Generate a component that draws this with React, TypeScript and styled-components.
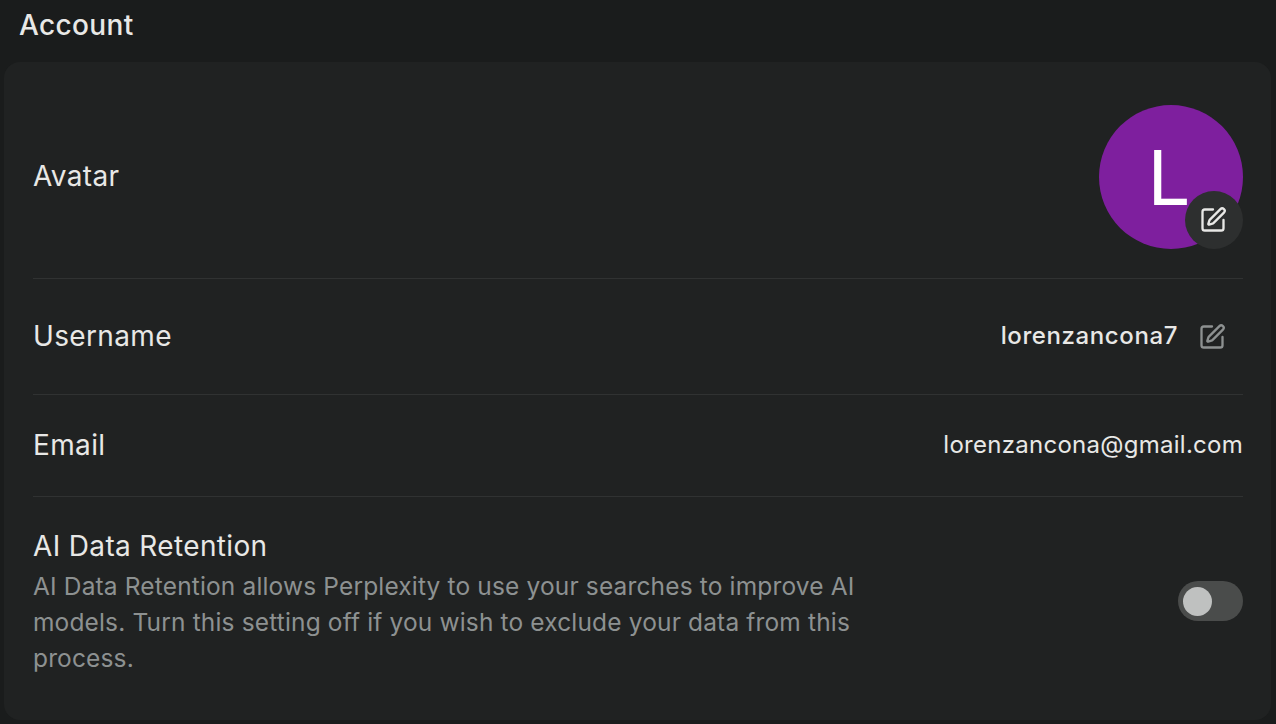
import React from "react";
import styled, { createGlobalStyle } from "styled-components";
import { SquarePen } from "lucide-react";

const GlobalStyle = createGlobalStyle`
  html, body {
    margin: 0;
    padding: 0;
    height: 100%;
    background: #1a1c1c;
    overflow: hidden;
  }
  body {
    font-family: "Inter", "Liberation Sans", sans-serif;
    color: #e8e8e6;
  }
`;

const Page = styled.div`
  width: 1276px;
  height: 724px;
  padding: 0 5px 4px 4px;
  box-sizing: border-box;
  display: flex;
  flex-direction: column;
`;

const Heading = styled.h1`
  margin: 0;
  height: 62px;
  padding: 6px 0 0 15px;
  box-sizing: border-box;
  font-size: 28px;
  line-height: 38px;
  font-weight: 500;
  letter-spacing: 0.35px;
  color: #e8e8e6;
`;

const Card = styled.section`
  flex: 1;
  background: #202222;
  border-radius: 16px;
  padding: 0 28px 0 29px;
  display: flex;
  flex-direction: column;
`;

const Row = styled.div<{ $height: number; $top?: number; $bottom?: number }>`
  height: ${(p) => p.$height}px;
  padding: ${(p) => p.$top ?? 0}px 0 ${(p) => p.$bottom ?? 0}px;
  display: flex;
  align-items: center;
  justify-content: space-between;
  box-sizing: border-box;
  border-bottom: 1px solid #303232;
  &:last-child {
    border-bottom: none;
  }
`;

const Label = styled.div`
  font-size: 28px;
  line-height: 36px;
  letter-spacing: 0.35px;
  color: #e8e8e6;
`;

const RowLabel = styled(Label)`
  padding-bottom: 2px;
`;

const Avatar = styled.div`
  position: relative;
  width: 144px;
  height: 144px;
  border-radius: 50%;
  background: #7e1f9e;
  display: flex;
  align-items: center;
  justify-content: center;
  padding-right: 4px;
  box-sizing: border-box;
  color: #fff;
  font-size: 76px;
  line-height: 1;
`;

const AvatarEdit = styled.div`
  position: absolute;
  right: 0;
  bottom: 0;
  width: 58px;
  height: 58px;
  padding-right: 2px;
  box-sizing: border-box;
  border-radius: 50%;
  background: #2d2f2f;
  display: flex;
  align-items: center;
  justify-content: center;
  color: #e8e8e6;
`;

const Value = styled.div<{ $bold?: boolean }>`
  font-size: 24px;
  line-height: 32px;
  margin-bottom: 2px;
  font-weight: ${(p) => (p.$bold ? 500 : 400)};
  letter-spacing: ${(p) => (p.$bold ? 0.6 : 0.27)}px;
  color: #e8e8e6;
`;

const Inline = styled.div`
  display: flex;
  align-items: center;
  gap: 20px;
  padding-right: 17px;
  color: #8d9191;
`;

const Description = styled.div`
  width: 840px;
  margin-top: 4px;
  font-size: 24.5px;
  line-height: 36px;
  letter-spacing: 0.15px;
  color: #8d9191;
`;

const Toggle = styled.div`
  width: 65px;
  height: 40px;
  border-radius: 20px;
  background: #4a4c4b;
  display: flex;
  align-items: center;
  padding-left: 5px;
  box-sizing: border-box;
`;

const Knob = styled.div`
  width: 29px;
  height: 29px;
  border-radius: 50%;
  background: #bfc1c0;
`;

const RetentionText = styled.div`
  margin-top: 2px;
`;

export default function App() {
  return (
    <Page>
      <GlobalStyle />
      <Heading>Account</Heading>
      <Card>
        <Row $height={217} $top={14}>
          <RowLabel>Avatar</RowLabel>
          <Avatar>
            L
            <AvatarEdit>
              <SquarePen size={28} strokeWidth={2} />
            </AvatarEdit>
          </Avatar>
        </Row>
        <Row $height={116}>
          <RowLabel>Username</RowLabel>
          <Inline>
            <Value $bold>lorenzancona7</Value>
            <SquarePen size={28} strokeWidth={2} />
          </Inline>
        </Row>
        <Row $height={102}>
          <RowLabel>Email</RowLabel>
          <Value>lorenzancona@gmail.com</Value>
        </Row>
        <Row $height={223} $bottom={15}>
          <RetentionText>
            <Label>AI Data Retention</Label>
            <Description>
              AI Data Retention allows Perplexity to use your searches to
              improve AI models. Turn this setting off if you wish to exclude
              your data from this process.
            </Description>
          </RetentionText>
          <Toggle>
            <Knob />
          </Toggle>
        </Row>
      </Card>
    </Page>
  );
}
